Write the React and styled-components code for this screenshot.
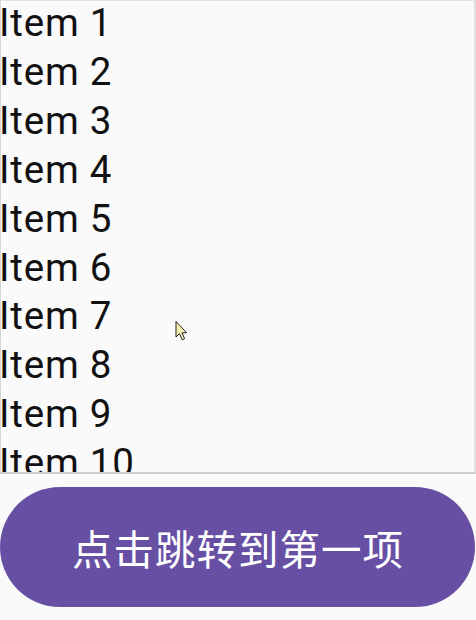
import React from 'react';
import styled, { createGlobalStyle } from 'styled-components';

const GlobalStyle = createGlobalStyle`
  html, body {
    margin: 0;
    padding: 0;
    background: #fafafa;
  }
`;

const Screen = styled.div`
  width: 476px;
  height: 620px;
  display: flex;
  flex-direction: column;
  position: relative;
  overflow: hidden;
  background: #fafafa;
  font-family: Roboto, "Noto Sans CJK SC", sans-serif;
`;

const List = styled.div`
  height: 471px;
  overflow: hidden;
  border-top: 1px solid #e2e2e2;
  border-left: 1px solid #d6d6d6;
  border-right: 2px solid #dedede;
  border-bottom: 2px solid #cfcfcf;
  background: #fafafa;
`;

const Rows = styled.div`
  display: flex;
  flex-direction: column;
  margin-top: -2px;
`;

const Row = styled.div`
  font-size: 38.5px;
  line-height: 48.9px;
  letter-spacing: 0.8px;
  color: #111;
  margin-left: -2px;
  white-space: nowrap;
`;

const Footer = styled.div`
  flex: 1;
  padding: 13px 1px 0 0;
`;

const JumpButton = styled.button`
  width: 100%;
  height: 120px;
  border: none;
  border-radius: 60px;
  background: #6750a4;
  color: #fff;
  font-family: "Noto Sans CJK SC", sans-serif;
  font-size: 40.5px;
  letter-spacing: 1px;
  padding: 0 0 0 1px;
  cursor: pointer;
`;

const Pointer = styled.svg`
  position: absolute;
  left: 174px;
  top: 320px;
  pointer-events: none;
`;

const items = Array.from({ length: 10 }, (_, i) => `Item ${i + 1}`);

const App = () => {
  return (
    <Screen>
      <GlobalStyle />
      <List>
        <Rows>
          {items.map((label) => (
            <Row key={label}>{label}</Row>
          ))}
        </Rows>
      </List>
      <Footer>
        <JumpButton>点击跳转到第一项</JumpButton>
      </Footer>
      <Pointer width="16" height="22" viewBox="0 0 16 22">
        <path
          d="M2 1.5 L2 17 L5.5 13.6 L8.3 19.8 L10.6 18.7 L8 12.8 L12.6 12.8 Z"
          fill="#f6f2b0"
          stroke="#222"
          strokeWidth="1"
          strokeLinejoin="round"
        />
      </Pointer>
    </Screen>
  );
};

export default App;
